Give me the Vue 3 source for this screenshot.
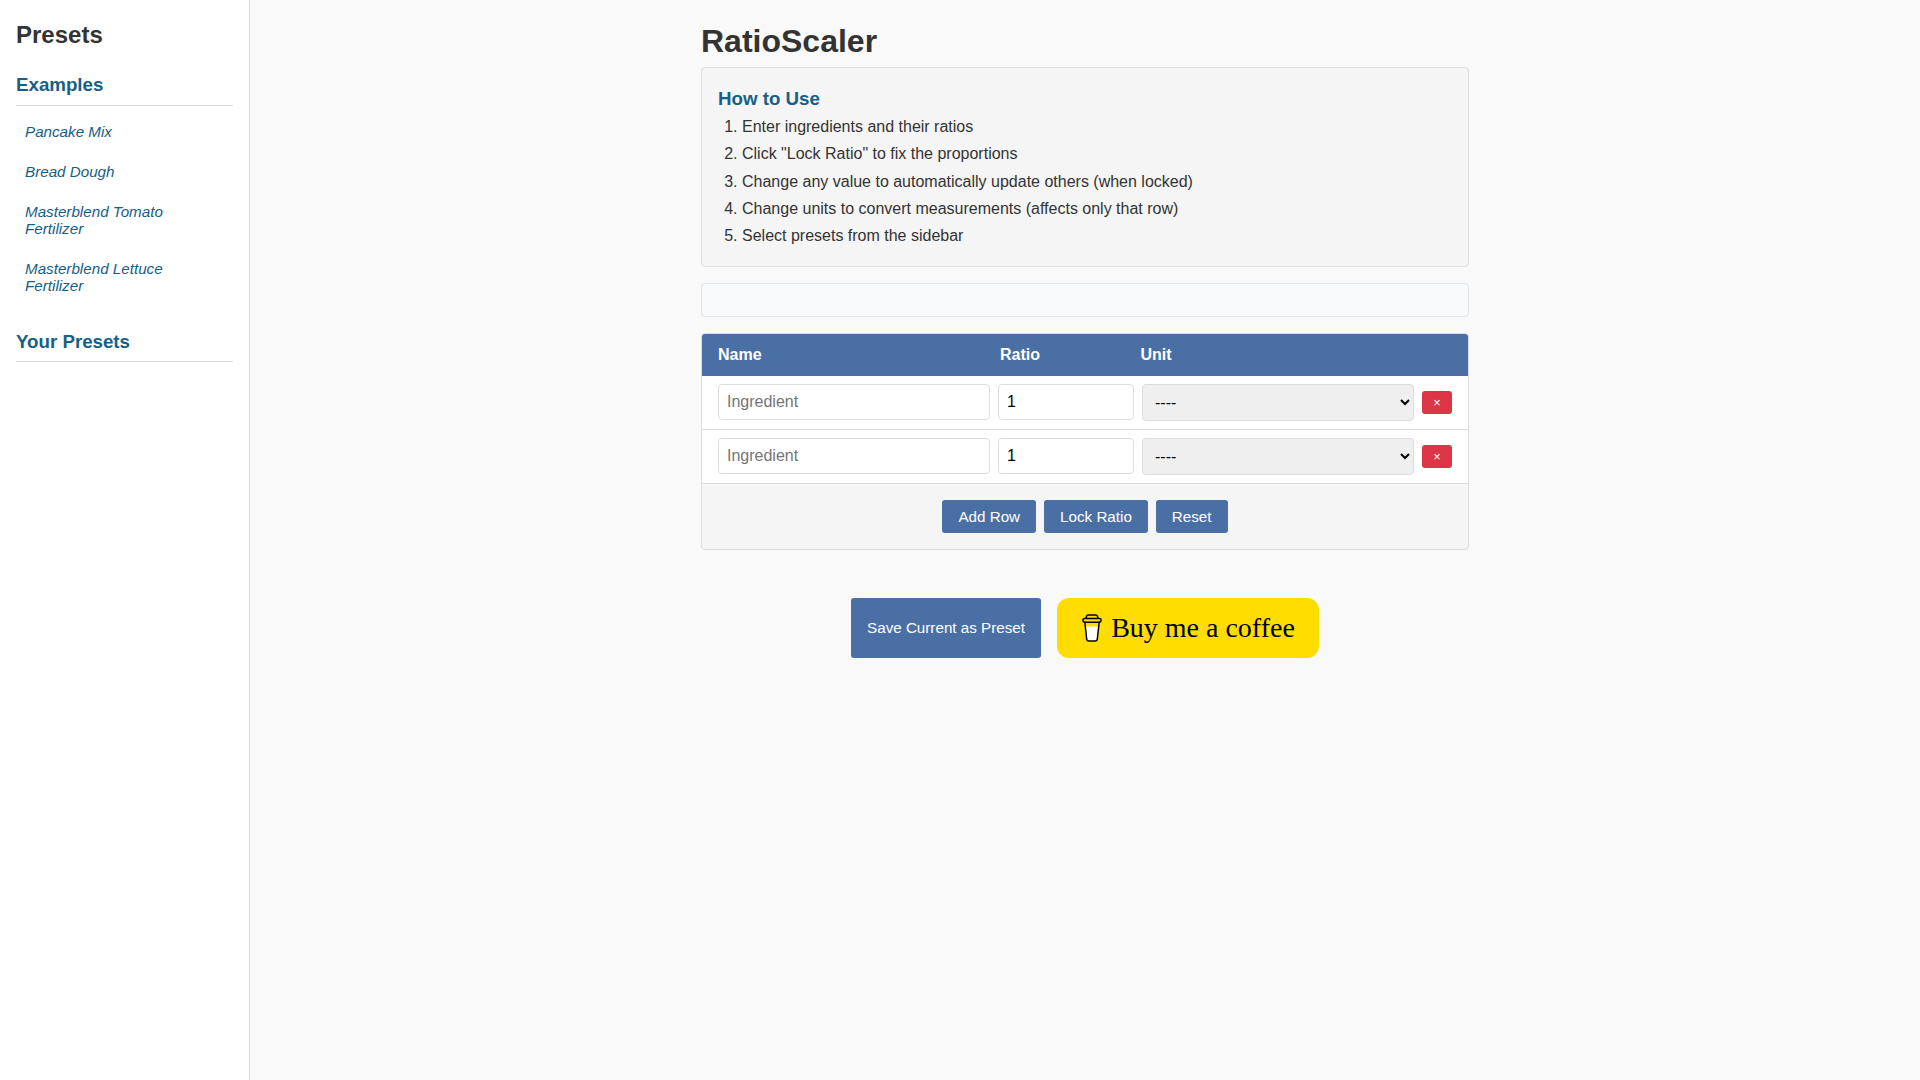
<script setup>
import { ref } from 'vue';

const examples = ['Pancake Mix', 'Bread Dough', 'Masterblend Tomato Fertilizer', 'Masterblend Lettuce Fertilizer'];
const steps = [
  'Enter ingredients and their ratios',
  'Click "Lock Ratio" to fix the proportions',
  'Change any value to automatically update others (when locked)',
  'Change units to convert measurements (affects only that row)',
  'Select presets from the sidebar'
];
const rows = ref([
  { id: 1, name: '', ratio: 1, unit: '' },
  { id: 2, name: '', ratio: 1, unit: '' }
]);
</script>

<template>
  <div class="layout">
    <aside class="sidebar">
      <h2>Presets</h2>
      <h3>Examples</h3>
      <ul class="preset-list">
        <li v-for="p in examples" :key="p">{{ p }}</li>
      </ul>
      <h3 class="your">Your Presets</h3>
    </aside>

    <main class="main">
      <div class="container">
        <h1>RatioScaler</h1>

        <section class="howto">
          <h3>How to Use</h3>
          <ol>
            <li v-for="s in steps" :key="s">{{ s }}</li>
          </ol>
        </section>

        <div class="status"></div>

        <section class="scaler">
          <div class="grid head">
            <span>Name</span>
            <span>Ratio</span>
            <span>Unit</span>
            <span class="spacer"></span>
          </div>
          <div v-for="r in rows" :key="r.id" class="grid row">
            <input v-model="r.name" type="text" placeholder="Ingredient">
            <input v-model="r.ratio" type="number">
            <select v-model="r.unit">
              <option value="">----</option>
            </select>
            <button class="del">×</button>
          </div>
          <div class="actions">
            <button class="btn">Add Row</button>
            <button class="btn">Lock Ratio</button>
            <button class="btn">Reset</button>
          </div>
        </section>

        <div class="bottom">
          <button class="btn save">Save Current as Preset</button>
          <a class="coffee">
            <svg width="20" height="28" viewBox="0 0 20 28" fill="none" stroke="#000" stroke-width="1.5" stroke-linejoin="round" stroke-linecap="round">
              <path d="M3.6 12.5 L16.4 12.5 L15.3 25 Q15.1 27 13.2 27 L6.8 27 Q4.9 27 4.7 25 Z" fill="#fff" stroke="none" />
              <path d="M2.8 8 L4.7 25 Q4.9 27 6.8 27 L13.2 27 Q15.1 27 15.3 25 L17.2 8" />
              <rect x="1" y="4.4" width="18" height="3.8" rx="1.4" />
              <path d="M4 4.2 L4.6 2 Q5 0.9 6.4 0.9 L13.6 0.9 Q15 0.9 15.4 2 L16 4.2" />
            </svg>
            <span>Buy me a coffee</span>
          </a>
        </div>
      </div>
    </main>
  </div>
</template>

<style>
html, body { margin: 0; background: #f9f9f9; }
</style>

<style scoped>
* { box-sizing: border-box; }
.layout {
  display: flex;
  min-height: 1080px;
  font-family: "Liberation Sans", Arial, sans-serif;
  color: #333;
  line-height: 1.6;
}
.sidebar {
  width: 250px;
  flex-shrink: 0;
  background: #fff;
  border-right: 1px solid #ddd;
  padding: 16px;
}
.sidebar h2 { margin: 0; font-size: 24px; line-height: 38px; padding-bottom: 2px; }
.sidebar h3 {
  margin: 14px 0 0;
  color: #166088;
  font-size: 18.72px;
  line-height: 30px;
  padding-bottom: 5px;
  border-bottom: 1px solid #ddd;
}
.sidebar h3.your { margin-top: 25px; padding-bottom: 4px; }
.preset-list { list-style: none; margin: 9px 0 0; padding: 0; }
.preset-list li {
  padding: 8px 32px 8px 9px;
  margin-bottom: 7px;
  font-size: 15.2px;
  line-height: 17px;
  font-style: italic;
  color: #166088;
}
.main { flex: 1; }
.container { max-width: 800px; margin: 0 auto; padding: 16px; }
h1 { margin: 0; font-size: 32px; line-height: 51px; }
.howto {
  background: #f5f5f5;
  border: 1px solid #ddd;
  border-radius: 4px;
  padding: 16px;
  height: 200px;
}
.howto h3 { margin: 0; color: #166088; font-size: 18.72px; line-height: 29px; }
.howto ol { margin: 0.2px 0 0; padding-left: 24px; }
.howto li { line-height: 27.2px; }
.status {
  height: 34px;
  margin-top: 16px;
  background: #f8f9fa;
  border: 1px solid #e1e4e8;
  border-radius: 4px;
}
.scaler {
  margin-top: 16px;
  border: 1px solid #ddd;
  border-radius: 4px;
  overflow: hidden;
  background: #f5f5f5;
}
.grid {
  display: grid;
  grid-template-columns: 272px 136px 272px 30px;
  column-gap: 8px;
  align-items: start;
  padding: 8px 16px;
}
.head {
  background: #4a6fa5;
  color: #fff;
  font-weight: bold;
  height: 42px;
}
.head span:nth-child(2) { padding-left: 2px; }
.head span:nth-child(3) { margin-left: -1.5px; }
.row { background: #fff; border-bottom: 1px solid #ddd; height: 54px; }
.row input, .row select {
  width: 100%;
  padding: 8px;
  font-size: 16px;
  font-family: "Liberation Sans", Arial, sans-serif;
  border: 1px solid #ddd;
  border-radius: 4px;
  color: #000;
  background: #fff;
  height: 36px;
}
.row select { background: #efefef; height: 37px; }
.row input::placeholder { color: #757575; }
.del {
  align-self: center;
  height: 23px;
  padding: 0;
  border: none;
  border-radius: 3px;
  background: #dc3545;
  color: #fff;
  font-size: 12.8px;
  font-family: "Liberation Sans", Arial, sans-serif;
}
.actions {
  display: flex;
  justify-content: center;
  gap: 8px;
  padding: 16px;
}
.btn {
  border: none;
  border-radius: 3px;
  background: #4a6fa5;
  color: #fff;
  font-family: "Liberation Sans", Arial, sans-serif;
  font-size: 15.2px;
  line-height: 17px;
  padding: 8px 16px;
}
.bottom {
  display: flex;
  justify-content: center;
  align-items: stretch;
  gap: 16px;
  margin-top: 48px;
}
.save { width: 190px; height: 60px; padding: 0 16px 2px; font-size: 15.2px; }
.coffee {
  display: flex;
  align-items: center;
  justify-content: center;
  gap: 9px;
  width: 262px;
  height: 60px;
  padding-left: 1px;
  background: #ffdd00;
  border-radius: 12px;
  color: #000;
  font-family: "Liberation Serif", "Times New Roman", serif;
  font-size: 28px;
  line-height: 1;
}
</style>
